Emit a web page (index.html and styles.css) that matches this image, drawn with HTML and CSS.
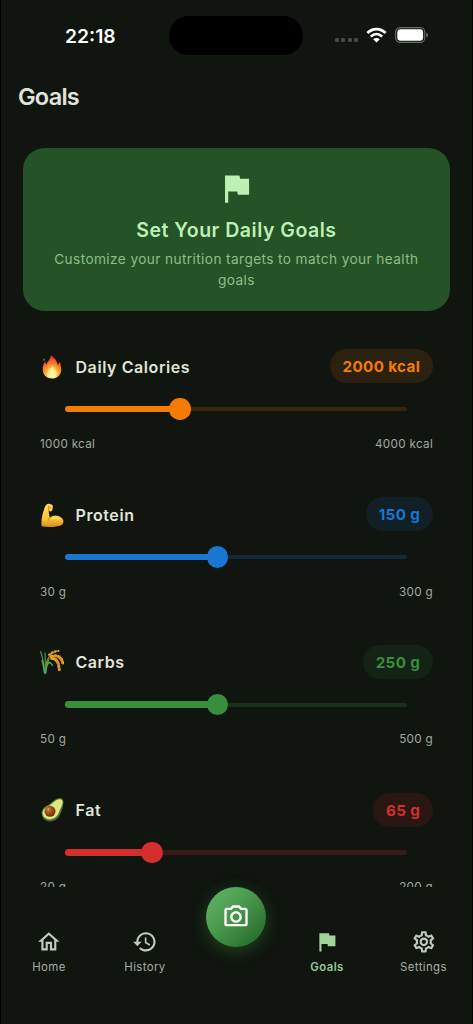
FILE: index.html
```html
<!DOCTYPE html>
<html lang="en">
  <head>
    <meta charset="UTF-8" />
    <meta name="viewport" content="width=device-width, initial-scale=1.0" />
    <title>Goals</title>
    <link rel="stylesheet" href="styles.css">
  </head>
  <body>
    <div class="phone">
      <div class="status-bar">
        <div class="time">22:18</div>
        <div class="island"></div>
        <div class="status-icons">
          <div class="signal"><i></i><i></i><i></i><i></i></div>
          <svg class="wifi" viewBox="0 0 21 16">
            <path d="M1.4 6.1C6.6.8 14.4.8 19.6 6.1" fill="none" stroke="#fff" stroke-width="2.9" />
            <path d="M4.8 9.6c3.5-3.4 7.9-3.4 11.4 0" fill="none" stroke="#fff" stroke-width="2.7" />
            <path d="M10.5 15.5l-3.300-3.300c1.900-1.700 4.700-1.700 6.600 0z" fill="#fff" />
          </svg>
          <svg class="battery" viewBox="0 0 34 16">
            <rect x=".6" y=".6" width="29.200" height="14.800" rx="4.600" fill="none" stroke="#697067" stroke-width="1.100" />
            <rect x="2.300" y="2.300" width="25.800" height="11.400" rx="3.200" fill="#fff" />
            <path d="M31.300 5.500c2.200.8 2.200 4.200 0 5z" fill="#697067" />
          </svg>
        </div>
      </div>

      <h1 class="page-title">Goals</h1>

      <main class="content">
        <section class="intro-card">
          <svg class="intro-icon" viewBox="0 0 24 24"><path d="M14.400 6L14 4H5v17h2v-7h5.600l.4 2h7V6z" /></svg>
          <h2>Set Your Daily Goals</h2>
          <p>Customize your nutrition targets to match your health goals</p>
        </section>

        <section class="goal calories">
          <div class="goal-header">
            <svg class="emoji" viewBox="0 0 24 24">
              <defs>
                <radialGradient id="flame" cx=".5" cy=".85" r=".75">
                  <stop offset="0" stop-color="#fffbe0" />
                  <stop offset=".3" stop-color="#ffd95a" />
                  <stop offset=".62" stop-color="#ff8a2b" />
                  <stop offset="1" stop-color="#ee3e1e" />
                </radialGradient>
              </defs>
              <path d="M10.500.5c.8 3-2.900 5.500-3.900 9C5.400 8.900 5.200 7.600 5.500 6.200 3.300 8.500 2.500 11.500 2.700 15c.2 5.200 4.300 8.500 9.300 8.500s9.200-3.600 9.300-8.600c.1-2.700-1-4.900-1-8-1.500.9-2.200 2.200-2.300 4C17.300 6.500 15 2.600 10.500.5z" fill="url(#flame)" />
              <path d="M4 6.200c-1-.8-1-2 .1-3 .9 1 .8 2.200-.1 3z" fill="#ee4b22" />
              <path d="M12.200 10c.2 3-3.900 4.500-4.700 8-.7 3.100 1.700 5 4.500 5s5.100-2 4.800-5.200c-.3-1.300-1-2-1.300-3.300-.7.6-.9 1.200-1 2-.2-2.600-.9-4.800-2.300-6.500z" fill="#fff1a0" opacity=".8" />
            </svg>
            <div class="goal-name">Daily Calories</div>
            <div class="goal-value">2000 kcal</div>
          </div>
          <div class="slider" style="--pos: 33.33%"><div class="fill"></div><div class="thumb"></div></div>
          <div class="range"><span>1000 kcal</span><span>4000 kcal</span></div>
        </section>

        <section class="goal protein">
          <div class="goal-header">
            <svg class="emoji" viewBox="0 0 24 24">
              <defs>
                <linearGradient id="skin" x1="0" y1="0" x2="0" y2="1">
                  <stop offset="0" stop-color="#ffdc63" />
                  <stop offset=".65" stop-color="#ffc336" />
                  <stop offset="1" stop-color="#dc8b17" />
                </linearGradient>
              </defs>
              <path d="M5.300 3.300C5.800 1.500 7.500.5 9.300.8l2.100.6c1.300.5 1.700 1.500 1.400 2.900l-.4 2.500c-.3 1.300-1.400 1.800-2.900 1.500L8.600 8c.5 2.300.7 4.200 1.200 6.700 3.300-3.300 9.600-2.500 12.500.8 1.700 2.200 1.500 5-.7 6.400-4.800 2.200-13.200 2.600-20 1.300-.7-5.600.8-13.600 3.700-19.900z" fill="url(#skin)" />
              <path d="M8.200 2.800l.7 2.200 2-.7M8.900 5l-.3 3M9.800 14.700c-1 .9-1.500 1.800-1.700 2.800" fill="none" stroke="#c47b16" stroke-width=".8" stroke-linecap="round" />
              <path d="M12 16c2-1.300 5.100-1.200 7.200-.1" fill="none" stroke="#ffe27b" stroke-width="1.200" stroke-linecap="round" />
            </svg>
            <div class="goal-name">Protein</div>
            <div class="goal-value">150 g</div>
          </div>
          <div class="slider" style="--pos: 44.44%"><div class="fill"></div><div class="thumb"></div></div>
          <div class="range"><span>30 g</span><span>300 g</span></div>
        </section>

        <section class="goal carbs">
          <div class="goal-header">
            <svg class="emoji" viewBox="0 0 24 24" fill="none" stroke-linecap="round">
              <path d="M4.500 23C4 14 2.500 7 .6 1.500M5.200 23C5.500 14 5.500 8 5 3M5.600 23c0-8 1.300-12 4-17" stroke="#43904b" stroke-width="1.300" />
              <path d="M4.700 23C3.800 18 2.800 13.500 2.200 10.500M5.600 23C6 18 7 15 8.500 12c1.500.4 3 1.700 4 3.500" stroke="#5ba754" stroke-width="1.400" />
              <path d="M6 15C7 8 10.500 4 16 1.800M7 13c2.300-5.300 6-7.400 10-6.600 4 .7 5.500 3.500 6 7" stroke="#b77a2b" stroke-width="1" />
              <path d="M9 4.800C12 2 15 1.200 18.500 1" stroke="#e4a23b" stroke-width="2" stroke-dasharray="1.200 2.200" />
              <path d="M11.500 6.500c4-1.900 8.500-.3 10.300 3.200l1.200 3.700" stroke="#eda631" stroke-width="3" stroke-dasharray=".8 2.800" />
              <path d="M12 8.500c3.500 0 6 3 6.500 6l.8 5" stroke="#eda631" stroke-width="3" stroke-dasharray="1.200 2.400" />
              <path d="M13 7c5 1 5.500 6 6.500 12M15 6c4 .5 6 3 7.500 7" stroke="#d88920" stroke-width="1.500" />
            </svg>
            <div class="goal-name">Carbs</div>
            <div class="goal-value">250 g</div>
          </div>
          <div class="slider" style="--pos: 44.44%"><div class="fill"></div><div class="thumb"></div></div>
          <div class="range"><span>50 g</span><span>500 g</span></div>
        </section>

        <section class="goal fat">
          <div class="goal-header">
            <svg class="emoji" viewBox="0 0 24 24">
              <defs>
                <radialGradient id="pit" cx=".35" cy=".35" r=".7">
                  <stop offset="0" stop-color="#cf762c" />
                  <stop offset="1" stop-color="#672a09" />
                </radialGradient>
              </defs>
              <path d="M20.500 3c3.600 3 2.300 8 .4 11.500-1.900 5.300-5.500 9-10.500 9-3.500 0-6.100-1.300-7.600-3.700z" fill="#52604e" />
              <path d="M22.600 1.300c1.600 2.200.9 5.600-.6 8.500-1.200 2.300-1.500 4-2.500 6.200-2.300 4.900-7.800 7.700-12.800 6C1 20 .2 14 3.400 10.200c1.800-2.200 4.500-3 6.800-4.700C13 3.300 15.200.9 18.500.3c1.700-.3 3.200-.1 4.100 1z" fill="#497a32" />
              <path d="M22 2.100c1.200 1.700.4 4.600-.9 7.100-1.300 2.500-1.600 4-2.500 6-2.100 4.500-7 7-11.300 5.700C2 19 1.500 14 4.300 10.800c1.700-1.900 4.300-2.700 6.700-4.400 2.700-2 4.900-4.500 7.700-5.100 1.400-.3 2.600-.1 3.300.8z" fill="#e2e77b" />
              <circle cx="10" cy="13.300" r="5.500" fill="url(#pit)" />
              <circle cx="8.300" cy="11.300" r="1" fill="#efa869" />
            </svg>
            <div class="goal-name">Fat</div>
            <div class="goal-value">65 g</div>
          </div>
          <div class="slider" style="--pos: 25%"><div class="fill"></div><div class="thumb"></div></div>
          <div class="range"><span>20 g</span><span>200 g</span></div>
        </section>
      </main>

      <nav class="bottom-nav">
        <div class="nav-item">
          <svg viewBox="0 0 24 24"><path d="M12 5.690l5 4.500V18h-2v-6H9v6H7v-7.810l5-4.500M12 3L2 12h3v8h6v-6h2v6h6v-8h3L12 3z" /></svg>
          <span>Home</span>
        </div>
        <div class="nav-item">
          <svg viewBox="0 0 24 24"><path d="M13 3c-4.970 0-9 4.030-9 9H1l3.890 3.890.07.14L9 12H6c0-3.870 3.130-7 7-7s7 3.130 7 7-3.130 7-7 7c-1.930 0-3.680-.79-4.940-2.060l-1.420 1.420C8.270 19.990 10.510 21 13 21c4.970 0 9-4.030 9-9s-4.030-9-9-9zm-1 5v5l4.280 2.540.72-1.210-3.500-2.080V8H12z" /></svg>
          <span>History</span>
        </div>
        <div class="camera-btn">
          <svg viewBox="0 0 24 24"><path d="M14.120 4l1.830 2H20v12H4V6h4.050l1.830-2h4.240M15 2H9L7.170 4H4c-1.100 0-2 .9-2 2v12c0 1.100.9 2 2 2h16c1.100 0 2-.9 2-2V6c0-1.100-.9-2-2-2h-3.170L15 2zm-3 7c1.650 0 3 1.350 3 3s-1.350 3-3 3-3-1.350-3-3 1.350-3 3-3m0-2c-2.760 0-5 2.240-5 5s2.240 5 5 5 5-2.240 5-5-2.240-5-5-5z" /></svg>
        </div>
        <div class="nav-item active">
          <svg viewBox="0 0 24 24"><path d="M14.400 6L14 4H5v17h2v-7h5.600l.4 2h7V6z" /></svg>
          <span>Goals</span>
        </div>
        <div class="nav-item">
          <svg viewBox="0 0 24 24"><path d="M19.430 12.980c.04-.32.07-.64.07-.98 0-.34-.03-.66-.07-.98l2.110-1.650c.19-.15.24-.42.12-.64l-2-3.460c-.09-.16-.26-.25-.44-.25-.06 0-.12.01-.17.03l-2.490 1c-.52-.4-1.080-.73-1.690-.98l-.38-2.650C14.460 2.180 14.250 2 14 2h-4c-.25 0-.46.18-.49.42l-.38 2.650c-.61.25-1.170.59-1.690.98l-2.490-1c-.06-.02-.12-.03-.18-.03-.17 0-.34.09-.43.25l-2 3.460c-.13.22-.07.49.12.64l2.110 1.650c-.04.32-.07.65-.07.98 0 .33.03.66.07.98l-2.110 1.650c-.19.15-.24.42-.12.64l2 3.460c.09.16.26.25.44.25.06 0 .12-.01.17-.03l2.490-1c.52.4 1.080.73 1.690.98l.38 2.650c.03.24.24.42.49.42h4c.25 0 .46-.18.49-.42l.38-2.650c.61-.25 1.170-.59 1.690-.98l2.490 1c.06.02.12.03.18.03.17 0 .34-.09.43-.25l2-3.460c.12-.22.07-.49-.12-.64l-2.110-1.650zm-1.980-1.710c.04.31.05.52.05.73 0 .21-.02.43-.05.73l-.14 1.130.89.7 1.080.84-.7 1.210-1.270-.51-1.040-.42-.9.68c-.43.32-.84.56-1.250.73l-1.060.43-.16 1.130-.2 1.350h-1.400l-.19-1.350-.16-1.130-1.060-.43c-.43-.18-.83-.41-1.230-.71l-.91-.7-1.060.43-1.270.51-.7-1.210 1.080-.84.89-.7-.14-1.130c-.03-.31-.05-.54-.05-.74s.02-.43.05-.73l.14-1.130-.89-.7-1.080-.84.7-1.210 1.270.51 1.040.42.9-.68c.43-.32.84-.56 1.250-.73l1.060-.43.16-1.130.2-1.350h1.390l.19 1.350.16 1.130 1.060.43c.43.18.83.41 1.230.71l.91.7 1.060-.43 1.270-.51.7 1.210-1.070.85-.89.7.14 1.130zM12 8c-2.210 0-4 1.790-4 4s1.790 4 4 4 4-1.790 4-4-1.790-4-4-4zm0 6c-1.100 0-2-.9-2-2s.9-2 2-2 2 .9 2 2-.9 2-2 2z" /></svg>
          <span>Settings</span>
        </div>
      </nav>
    </div>
  </body>
</html>
```
FILE: styles.css
```css
* {
  box-sizing: border-box;
}
body {
  margin: 0;
  background: #000;
  font-family: Inter, "Liberation Sans", sans-serif;
  color: #e0e4db;
}
.phone {
  display: flex;
  flex-direction: column;
  height: 100vh;
  overflow: hidden;
  margin: 0 1px;
  background: #10150f;
}

.status-bar {
  flex: none;
  display: grid;
  grid-template-columns: 168px 134px 1fr;
  align-items: center;
  height: 70px;
}
.time {
  padding: 1px 0 0 64px;
  font-size: 19.3px;
  font-weight: 600;
  line-height: 24px;
  color: #fff;
}
.island {
  height: 39px;
  border-radius: 20px;
  background: #000;
}
.status-icons {
  display: flex;
  align-items: center;
  padding-left: 32px;
}
.signal {
  display: flex;
  gap: 2.4px;
  padding-top: 10px;
}
.signal i {
  width: 4px;
  height: 4px;
  border-radius: 1.3px;
  background: #484b46;
}
.wifi {
  width: 21px;
  height: 16px;
  margin-left: 8px;
}
.battery {
  width: 34px;
  height: 16px;
  margin-left: 8px;
}

.page-title {
  flex: none;
  margin: 0;
  height: 78px;
  padding: 12px 17px 0;
  font-size: 23.5px;
  font-weight: 600;
  line-height: 30px;
  letter-spacing: -0.75px;
}

.content {
  flex: none;
  height: 738.5px;
  padding: 0 21.8px 0 21.6px;
  overflow: hidden;
}
.intro-card {
  height: 162.5px;
  padding: 21.4px 24px;
  border-radius: 21.4px;
  background: #255226;
  color: #bcf0b4;
  text-align: center;
}
.intro-icon {
  display: block;
  width: 38.5px;
  height: 38.5px;
  margin: 0 auto;
  fill: currentColor;
}
.intro-card h2 {
  margin: 8.5px 0 5px;
  font-size: 19.5px;
  font-weight: 600;
  line-height: 28px;
  letter-spacing: 0.5px;
}
.intro-card p {
  margin: 0;
  font-size: 13.7px;
  line-height: 20.4px;
  letter-spacing: 0.38px;
  color: #8dbf86;
}

.goal {
  height: 147.8px;
  padding: 0 17.2px 0 17.4px;
}
.intro-card + .goal {
  margin-top: 38.7px;
}
.goal-header {
  display: flex;
  align-items: center;
  height: 34.3px;
}
.emoji {
  width: 24px;
  height: 24px;
  margin-top: 1px;
}
.goal-name {
  flex: 1;
  padding: 1px 0 0 11.5px;
  font-size: 16px;
  font-weight: 600;
  letter-spacing: 0.58px;
}
.goal-value {
  height: 34.3px;
  padding: 0 12.9px;
  border-radius: 17.2px;
  background: var(--pill);
  color: var(--color);
  font-size: 15.2px;
  font-weight: 700;
  line-height: 35.3px;
  letter-spacing: 0.35px;
}

.slider {
  display: grid;
  align-items: center;
  height: 51.4px;
  margin: 0 25.6px 0 25px;
}
.slider > *,
.slider::before {
  grid-area: 1 / 1;
}
.slider::before {
  content: "";
  height: 4.4px;
  border-radius: 2.2px;
  background: var(--track);
}
.fill {
  width: var(--pos);
  height: 6.6px;
  border-radius: 3.3px;
  background: var(--color);
}
.thumb {
  width: 21.4px;
  height: 21.4px;
  margin-left: calc(var(--pos) * 0.984 - 8px);
  border-radius: 50%;
  background: var(--color);
}
.range {
  display: flex;
  justify-content: space-between;
  padding-top: 1px;
  font-size: 11.7px;
  line-height: 17.6px;
  letter-spacing: 0.3px;
  color: #a4a9a1;
}
.calories {
  --color: #f57c00;
  --pill: #2c200e;
  --track: #3b240d;
}
.protein {
  --color: #1976d2;
  --pill: #111f27;
  --track: #12283b;
}
.carbs {
  --color: #388e3c;
  --pill: #152316;
  --track: #19301a;
}
.fat {
  --color: #d32f2f;
  --pill: #2a1713;
  --track: #371a17;
}

.bottom-nav {
  flex: 1;
  display: grid;
  grid-template-columns: 96px 96px 86px 96px 97px;
  align-items: start;
}
.nav-item {
  display: flex;
  flex-direction: column;
  align-items: center;
  padding-top: 42.5px;
  font-size: 11.4px;
  line-height: 16px;
  letter-spacing: 0.4px;
  color: #a8ada4;
}
.nav-item svg {
  width: 25.7px;
  height: 25.7px;
  margin-bottom: 4.5px;
  fill: #c2c9bd;
}
.nav-item.active {
  font-weight: 600;
  color: #96ca92;
}
.nav-item.active svg {
  fill: #a1d39a;
}
.camera-btn {
  display: flex;
  align-items: center;
  justify-content: center;
  justify-self: center;
  width: 60px;
  height: 60px;
  border-radius: 50%;
  background: linear-gradient(135deg, #66bb6a -5%, #4c9d50 40%, #1b5e20 105%);
  box-shadow: 0 4px 16px rgba(56, 142, 60, 0.4);
}
.camera-btn svg {
  width: 28px;
  height: 28px;
  fill: #fff;
}
```
